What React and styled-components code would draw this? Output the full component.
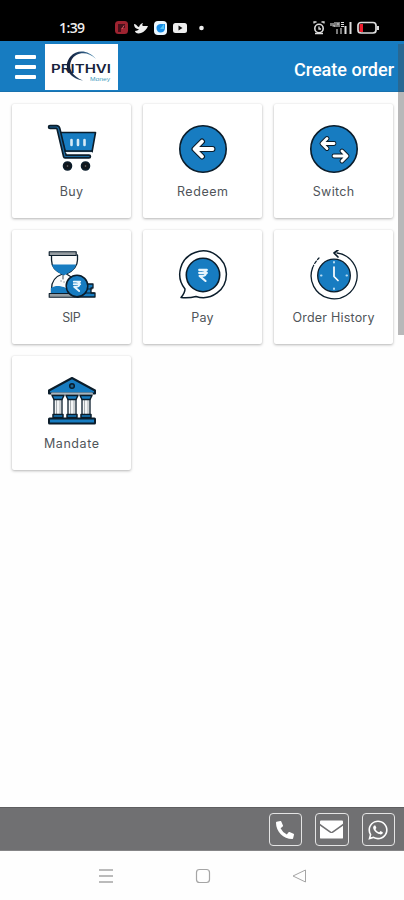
import React from "react";
import styled, { createGlobalStyle } from "styled-components";
import { FaPhoneAlt, FaWhatsapp } from "react-icons/fa";

const BLUE = "#177cc1";
const INK = "#0b1d2b";

const Global = createGlobalStyle`
  * { box-sizing: border-box; }
  body { margin: 0; background: #fefefe; font-family: Roboto, "Liberation Sans", sans-serif; }
  svg { display: block; flex: none; }
`;

const Screen = styled.div`
  width: 404px;
  height: 900px;
  display: flex;
  flex-direction: column;
  overflow: hidden;
  background: #fefefe;
`;

const StatusBar = styled.div`
  height: 41px;
  flex: none;
  background: #000;
  color: #eee;
  display: flex;
  align-items: center;
  padding: 14px 23px 0 59px;
`;

const Clock = styled.span`
  width: 55px;
  font: 600 14px/18px "Open Sans", sans-serif;
  letter-spacing: -0.6px;
`;

const Spacer = styled.div`
  flex: 1;
`;

const Header = styled.header`
  height: 51px;
  flex: none;
  background: ${BLUE};
  display: flex;
  align-items: center;
  padding: 1px 10px 0 15px;
  border-bottom: 1px solid #1871ae;
`;

const MenuButton = styled.button`
  width: 30px;
  height: 24px;
  padding: 0;
  border: 0;
  background: none;
  display: flex;
  flex-direction: column;
  gap: 6px;
`;

const MenuLine = styled.span`
  width: 21px;
  height: 4px;
  border-radius: 1px;
  background: #fff;
`;

const Logo = styled.div`
  width: 73px;
  height: 46px;
  background: #fff;
`;

const Title = styled.h1`
  margin: 7px 0 0;
  font: 500 18px/24px Roboto, sans-serif;
  color: #fff;
  white-space: nowrap;
`;

const Body = styled.main`
  flex: 1;
  position: relative;
  padding: 12px 11px 0 12px;
`;

const ScrollThumb = styled.div`
  position: absolute;
  top: -48px;
  right: 0;
  width: 6px;
  height: 291px;
  background: rgba(70, 70, 74, 0.38);
`;

const Grid = styled.div`
  display: grid;
  grid-template-columns: repeat(3, 119px);
  grid-auto-rows: 114px;
  gap: 12px;
`;

const Card = styled.div`
  background: #fff;
  border-radius: 2px;
  box-shadow: 0 1px 3px rgba(0, 0, 0, 0.28), 0 0 2px rgba(0, 0, 0, 0.06);
  display: flex;
  flex-direction: column;
  align-items: center;
  padding-top: 20px;
`;

const Label = styled.span`
  margin-top: 9px;
  font: 400 12.5px/18px Inter, "Open Sans", sans-serif;
  letter-spacing: ${(p) => p.$track || 0}px;
  margin-right: ${(p) => -(p.$track || 0)}px;
  color: #50555a;
  white-space: nowrap;
`;

const Footer = styled.footer`
  height: 44px;
  flex: none;
  background: #707072;
  border-top: 1px solid #5e5e60;
  border-bottom: 1px solid #858587;
  display: flex;
  align-items: center;
  justify-content: flex-end;
  gap: 13px;
  padding: 1px 9px 0 0;
`;

const ContactButton = styled.button`
  width: 33.5px;
  height: 33px;
  padding: 0;
  border: 1.5px solid #e4e4e4;
  border-radius: 4px;
  background: none;
  color: #fff;
  display: flex;
  align-items: center;
  justify-content: center;
`;

const NavBar = styled.nav`
  height: 49px;
  flex: none;
  background: #fefefe;
  display: flex;
  align-items: center;
  justify-content: space-between;
  padding: 0 97px 0 98px;
`;

const LogoArt = () => (
  <svg width="73" height="46" viewBox="0 0 73 46">
    <defs>
      <linearGradient id="arc" x1="0" x2="1">
        <stop offset="0" stopColor="#111a35" />
        <stop offset=".5" stopColor="#254a70" />
        <stop offset="1" stopColor="#5595ba" />
      </linearGradient>
    </defs>
    <path d="M51 15C44 6 32 5 25.500 12.500 17.500 22 23 34 38 36.500 27 32 22.500 24 26.500 16 31 7.500 43 7 51 15Z" fill="url(#arc)" />
    <text x="6" y="29" fontFamily="Inter, sans-serif" fontWeight="600" fontSize="11.500" textLength="60" lengthAdjust="spacingAndGlyphs" fill="#17233c">PRITHVI</text>
    <text x="45" y="37" fontFamily="Liberation Sans, sans-serif" fontSize="5.500" textLength="20" lengthAdjust="spacingAndGlyphs" fill="#429cbe">Money</text>
  </svg>
);

const AppBadges = () => (
  <svg width="93" height="16" viewBox="0 0 93 16">
    <rect x="1" y="1" width="13" height="13" rx="3.5" fill="#9e2330" />
    <path d="M4 12V4h7v4H7v4Z" fill="#46101a" />
    <path d="M10 5.500 8 9" stroke="#d55b62" />
    <path d="M20 4c3 0 3 3 5 3 1-3 3-4 4-4-1 2-1 2 0 3h5c-1 3-4 6-7 7-3 1-6 0-6-2 2 0 3-1 4-2-3 0-5-2-5-5Z" fill="#eee" />
    <rect x="40" y="1" width="13" height="14" rx="4" fill="#edf8ff" />
    <path d="M42.500 8c0-3 2-4 5-4h3.500v4c0 3-2 4.500-4.500 4.500s-4-2-4-4.500Z" fill="#198ee8" />
    <path d="m46 9 4-5v5Z" fill="#54c7f7" />
    <rect x="59" y="3" width="14" height="10" rx="2.500" fill="#eee" />
    <path d="m64.500 5.500 4 2.500-4 2.500Z" fill="#111" />
    <circle cx="87.500" cy="8" r="2.300" fill="#eee" />
  </svg>
);

const SystemStatus = () => (
  <svg width="68" height="16" viewBox="0 0 68 16" fill="none" stroke="#ddd">
    <circle cx="6" cy="8.500" r="4.200" strokeWidth="1.600" />
    <path d="M6 6.500v2.500h2M1 3.500V2h2.500M11 3.500V2H8.500M2 13.500h8" strokeWidth="1.300" />
    <path d="M18 3v3m2-3v3h2M22 2v5M24 4h2M24 2v5M26 2v5M28 2.500h3M28 4.500h3M28 6.500h3M24 9v5M28 8v6" strokeWidth="1.100" />
    <path d="M32.500 6v8M37.500 2v12" strokeWidth="2" />
    <rect x="45" y="2.500" width="18" height="10.500" rx="3" strokeWidth="1.700" />
    <path d="M46.500 4h3.500v8h-3.500Z" fill="#ed1c2c" stroke="none" />
    <path d="M65 6v4" strokeWidth="2" />
  </svg>
);

const Icon = ({ children }) => (
  <svg width="50" height="50" viewBox="0 0 50 50" fill="none" stroke={INK} strokeWidth="1.600" strokeLinecap="round" strokeLinejoin="round">
    {children}
  </svg>
);

const BuyIcon = () => (
  <Icon>
    <path d="M13 8.500h35.500L45 28H18Z" fill={BLUE} />
    <path d="M3 3h6.500q1.500 0 2 2L18 32.500h24" strokeWidth="4.500" />
    <path d="M3 3h6.500q1.500 0 2 2L18 32.500h24" stroke="#1c699f" strokeWidth="1.200" />
    <path d="M19.500 28.500h25" stroke="#e8f0f5" />
    <path d="M18 27h27" />
    <path d="M24.500 16v5M31 16v5M37.500 16v5" stroke="#d6eaf7" strokeWidth="2.600" />
    {[20.500, 38.500].map((x) => (
      <g key={x}>
        <circle cx={x} cy="42" r="4" fill="#10151a" />
        <circle cx={x} cy="42" r=".8" fill="#73777b" stroke="none" />
      </g>
    ))}
  </Icon>
);

const RedeemIcon = () => (
  <Icon>
    <circle cx="25" cy="25" r="23.200" fill={BLUE} />
    <path d="m24 17.500-7.500 7.500 7.500 7.500M17.500 25H34.500" strokeWidth="6" />
    <path d="m24 17.500-7.500 7.500 7.500 7.500M17.500 25H34.500" stroke="#fff" strokeWidth="3.800" />
  </Icon>
);

const SwitchIcon = () => (
  <Icon>
    <circle cx="25" cy="25" r="23.200" fill={BLUE} />
    <path d="m18 14.500-5 5 5 5M13.500 19.500H25M33 27l5 5-5 5M25 32h12" strokeWidth="4.900" />
    <path d="m18 14.500-5 5 5 5M13.500 19.500H25M33 27l5 5-5 5M25 32h12" stroke="#fff" strokeWidth="2.900" />
  </Icon>
);

const Rupee = ({ x, y, scale = 1 }) => (
  <g transform={`translate(${x} ${y}) scale(${scale})`} stroke="#e8f5fd" strokeWidth="2.500">
    <path d="M-4.500-6h9M-4.500-2.500h9M-4.500-6h3C5-6 5 1-1.500 1h-2.500L3 7" />
  </g>
);

const SipIcon = () => (
  <Icon>
    <path d="M4.500 5v5c0 8 6 12 11 14-6 2-11 7-11 15v5h25v-5c0-8-4-12-10-15 6-3 11-7 11-14V5" fill="#fbfbfb" strokeWidth="1.300" />
    <path d="M5 14.500h24c-1 5-5 7-12 11C10 22 6 19 5 14.500Z" fill={BLUE} stroke="none" />
    <path d="M4 43v-5c5-3 8-2 13-1l9 6Z" fill={BLUE} stroke="none" />
    <path d="M16 25v4M14 31h.1M17 32h.1" strokeWidth=".8" />
    <rect x="2.200" y="1.800" width="27" height="3.700" fill="#969ca1" strokeWidth="1.100" />
    <rect x="2.200" y="43.500" width="29" height="3.700" fill="#929ba1" strokeWidth="1.100" />
    <path d="M38 34h8v4h-2v5h4v4H30v-4h8Z" fill={BLUE} strokeWidth="1.300" />
    <path d="M36 39h9M33 43h14" strokeWidth="1" />
    <circle cx="30" cy="36" r="10.800" fill={BLUE} strokeWidth="1.500" />
    <Rupee x={30} y={36} scale={0.72} />
  </Icon>
);

const PayIcon = () => (
  <Icon>
    <path d="M7 39A23.300 23.300 0 1 1 18 46.500C12 48 8 48 3 47.500 6 44 7 42 7 39Z" fill="#fff" strokeWidth="1.500" />
    <circle cx="25" cy="25" r="16.700" fill={BLUE} />
    <Rupee x={25} y={25} scale={0.85} />
  </Icon>
);

const HistoryIcon = () => (
  <Icon>
    <path d="M28 3A23 23 0 1 1 3.500 18" strokeWidth="1.300" />
    <path d="M3.500 18C5 14 7 11 10 8" strokeWidth="1.200" strokeDasharray="3 2" />
    <path d="m29 0-4 3 4 4" strokeWidth="1.700" />
    <circle cx="25" cy="25.500" r="16.300" fill={BLUE} strokeWidth="1.300" />
    <path d="M25 17v9.500l4 4" stroke="#fff" strokeWidth="1.700" />
    <path d="M25 12v.5M25 38.500v.5M12 25.500h.5M37.500 25.500h.5" stroke="#b7dcf2" strokeWidth="2" />
  </Icon>
);

const MandateIcon = () => (
  <Icon>
    <path d="M25 2 48 14.500v3H2v-3Z" fill={BLUE} strokeWidth="2" />
    <path d="M5 17.500h40" stroke="#a9b5bd" strokeWidth="2" />
    <circle cx="25" cy="10" r="2.300" fill="#1d648f" strokeWidth="1.500" />
    {[5, 19, 33].map((x) => (
      <g key={x}>
        <path d={`M${x + 2} 23h8v18H${x + 2}Z`} fill="#f3f5f6" strokeWidth="1.300" />
        <path d={`M${x + 4.5} 24v16M${x + 8} 24v16`} stroke="#a7adb1" strokeWidth="1" />
        <path d={`M${x} 19.500h12l-2 4H${x + 2}Z`} fill={BLUE} strokeWidth="1.400" />
        <path d={`M${x + 1} 38.500h10v3H${x + 1}Z`} fill={BLUE} strokeWidth="1.500" />
      </g>
    ))}
    <rect x="2" y="42.500" width="46" height="5" rx=".5" fill={BLUE} strokeWidth="2" />
  </Icon>
);

const EnvelopeIcon = () => (
  <svg width="23" height="19" viewBox="0 0 24 19" fill="#fff">
    <path d="M1 0h22q1 0 1 1v2.500L12 12 0 3.500V1q0-1 1-1Z" />
    <path d="m0 5.500 10 7q2 1.300 4 0l10-7V18q0 1-1 1H1q-1 0-1-1Z" />
  </svg>
);

const NavIcon = ({ d, width = 1.2 }) => (
  <svg width="16" height="16" viewBox="0 0 16 16" fill="none" stroke="#a5a5a5" strokeWidth={width} strokeLinejoin="round">
    <path d={d} />
  </svg>
);

const actions = [
  { label: "Buy", icon: BuyIcon, track: 0.35 },
  { label: "Redeem", icon: RedeemIcon, track: 0.55 },
  { label: "Switch", icon: SwitchIcon, track: 0.35 },
  { label: "SIP", icon: SipIcon, track: -0.5 },
  { label: "Pay", icon: PayIcon, track: 0.2 },
  { label: "Order History", icon: HistoryIcon, track: 0.2 },
  { label: "Mandate", icon: MandateIcon, track: 0.6 },
];

export default function App() {
  return (
    <>
      <Global />
      <Screen>
        <StatusBar>
          <Clock>1:39</Clock>
          <AppBadges />
          <Spacer />
          <SystemStatus />
        </StatusBar>
        <Header>
          <MenuButton aria-label="Menu">
            <MenuLine />
            <MenuLine />
            <MenuLine />
          </MenuButton>
          <Logo><LogoArt /></Logo>
          <Spacer />
          <Title>Create order</Title>
        </Header>
        <Body>
          <Grid>
            {actions.map(({ label, icon: ActionIcon, track }) => (
              <Card key={label}>
                <ActionIcon />
                <Label $track={track}>{label}</Label>
              </Card>
            ))}
          </Grid>
          <ScrollThumb />
        </Body>
        <Footer>
          <ContactButton aria-label="Call"><FaPhoneAlt size={18} /></ContactButton>
          <ContactButton aria-label="Email"><EnvelopeIcon /></ContactButton>
          <ContactButton aria-label="WhatsApp"><FaWhatsapp size={22} /></ContactButton>
        </Footer>
        <NavBar>
          <NavIcon d="M1 2h14M1 8h14M1 14h14" width={1.6} />
          <NavIcon d="M4.500 1.500h7q3 0 3 3v7q0 3-3 3h-7q-3 0-3-3v-7q0-3 3-3Z" />
          <NavIcon d="M14.500 2v12L2 8Z" width={1} />
        </NavBar>
      </Screen>
    </>
  );
}
